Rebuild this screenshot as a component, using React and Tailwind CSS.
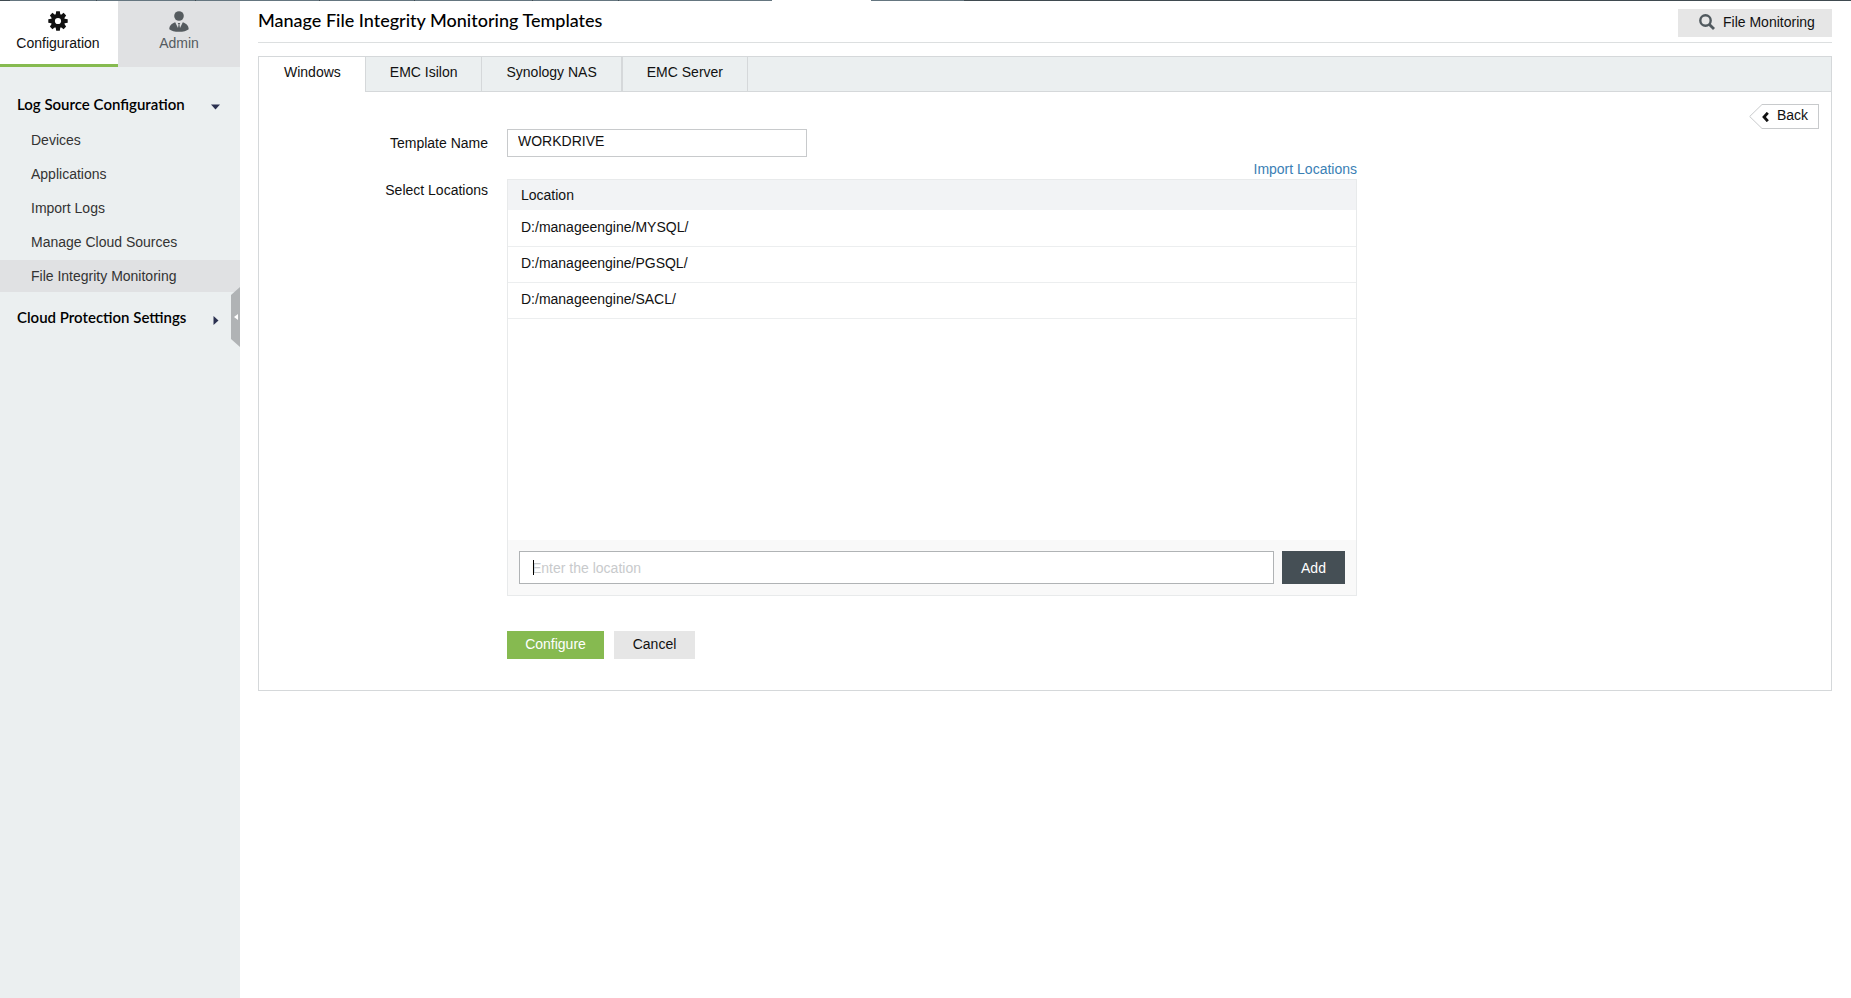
import { useState } from "react";

const menuItems = [
  "Devices",
  "Applications",
  "Import Logs",
  "Manage Cloud Sources",
  "File Integrity Monitoring",
];

const tabs = ["Windows", "EMC Isilon", "Synology NAS", "EMC Server"];

function GearIcon() {
  return (
    <svg width="20" height="20" viewBox="0 0 20 20" fill="#111">
      {[0, 45, 90, 135].map((angle) => (
        <path
          key={angle}
          d="M8.2 0.3h3.6l0.5 3v13.4l-0.5 3H8.2l-0.5-3V3.3z"
          transform={`rotate(${angle} 10 10)`}
        />
      ))}
      <circle cx="10" cy="10" r="7" />
      <circle cx="10" cy="10" r="3.1" fill="#fff" />
    </svg>
  );
}

function AdminIcon() {
  return (
    <svg width="20" height="21" viewBox="0 0 20 21" fill="currentColor">
      <circle cx="10" cy="5" r="4.8" />
      <path d="M0.3 18.2C0.3 14.5 2.6 12.6 6.2 11.2L9 17l0.6-3.4-0.9-1.5h2.6l-0.9 1.5L11 17l2.8-5.8c3.6 1.4 5.9 3.3 5.9 7-1.8 1.7-5.6 2.6-9.7 2.6s-7.9-0.9-9.7-2.6z" />
    </svg>
  );
}

function SearchIcon() {
  return (
    <svg width="16" height="16" viewBox="0 0 16 16" fill="none" stroke="#50595e">
      <circle cx="6.5" cy="6.5" r="5.2" strokeWidth="2.4" />
      <path d="M10.4 10.4L15 15" strokeWidth="2.8" />
    </svg>
  );
}

function TopStrip() {
  return (
    <div className="flex h-px">
      <div className="w-[10px] bg-[#3f4a50]" />
      <div className="w-[86px] bg-[#657680]" />
      <div className="w-px bg-[#3f4a50]" />
      <div className="w-[98px] bg-[#657680]" />
      <div className="w-px bg-[#3f4a50]" />
      <div className="w-[123px] bg-[#657680]" />
      <div className="w-px bg-[#3f4a50]" />
      <div className="w-[94px] bg-[#657680]" />
      <div className="w-px bg-[#3f4a50]" />
      <div className="w-[117px] bg-[#657680]" />
      <div className="w-px bg-[#3f4a50]" />
      <div className="w-[85px] bg-[#657680]" />
      <div className="w-px bg-[#3f4a50]" />
      <div className="w-[153px] bg-[#657680]" />
      <div className="w-[99px] bg-white" />
      <div className="w-[93px] bg-[#657680]" />
      <div className="flex-1 bg-[#3f4a50]" />
    </div>
  );
}

function Sidebar() {
  return (
    <aside className="relative w-60 shrink-0 bg-[#ebeff0]">
      <nav className="flex h-[66px] text-sm leading-5">
        <a
          href="#configuration"
          className="flex w-[118px] flex-col items-center border-b-3 border-[#86ba50] bg-white pt-[10px] pr-[2px] text-[#111]"
        >
          <GearIcon />
          <span className="mt-[2px]">Configuration</span>
        </a>
        <a
          href="#admin"
          className="flex flex-1 flex-col items-center bg-[#e0e1e3] pt-[10px] text-[#555b5f]"
        >
          <AdminIcon />
          <span className="mt-px">Admin</span>
        </a>
      </nav>

      {/* Log source section */}
      <button className="mt-7 flex h-5 w-full items-center justify-between pr-5 pl-[17px] font-[Lato,sans-serif] text-[15px] font-semibold text-black">
        Log Source Configuration
        <svg width="9" height="6" viewBox="0 0 9 6" className="mt-1" fill="#2b3150">
          <path d="M0 0.5h9L4.5 5.5z" />
        </svg>
      </button>
      <ul className="mt-[9px] flex flex-col gap-[2px] text-sm text-[#333]">
        {menuItems.map((item) => (
          <li key={item}>
            <a
              href="#"
              className={`flex h-8 items-center pl-[31px] ${
                item === "File Integrity Monitoring" ? "bg-[#e0e1e3]" : ""
              }`}
            >
              {item}
            </a>
          </li>
        ))}
      </ul>
      <button className="mt-4 flex h-5 w-full items-center justify-between pr-[21px] pl-[17px] font-[Lato,sans-serif] text-[15px] font-semibold text-black">
        Cloud Protection Settings
        <svg width="6" height="9" viewBox="0 0 6 9" className="mt-1" fill="#2b3150">
          <path d="M0.5 0v9L5.5 4.5z" />
        </svg>
      </button>

      {/* Collapse handle */}
      <button aria-label="Collapse menu" className="absolute top-[286px] right-0">
        <svg width="9" height="60" viewBox="0 0 9 60">
          <path d="M9 0v60L0 52V8z" fill="#b0b3b5" />
          <path d="M7 27v6L3 30z" fill="#fff" />
        </svg>
      </button>
    </aside>
  );
}

export default function App() {
  const [activeTab, setActiveTab] = useState("Windows");
  const [templateName, setTemplateName] = useState("WORKDRIVE");
  const [newLocation, setNewLocation] = useState("");
  const [locations, setLocations] = useState([
    "D:/manageengine/MYSQL/",
    "D:/manageengine/PGSQL/",
    "D:/manageengine/SACL/",
  ]);

  const addLocation = () => {
    if (!newLocation) return;
    setLocations([...locations, newLocation]);
    setNewLocation("");
  };

  return (
    <div className="flex min-h-screen flex-col bg-white font-['Liberation_Sans',Arial,sans-serif] text-sm text-[#111]">
      <TopStrip />
      <div className="flex flex-1">
        <Sidebar />

        <main className="min-w-0 flex-1 pr-[19px] pl-[18px]">
          <header className="flex h-[42px] items-start justify-between border-b border-[#dcdfe0] pt-2">
            <h1 className="font-[Lato,sans-serif] text-lg leading-[22px] font-medium text-black">
              Manage File Integrity Monitoring Templates
            </h1>
            <button className="flex h-7 w-[154px] items-center gap-2 bg-[#e6e6e6] pb-[2px] pl-[21px]">
              <SearchIcon />
              File Monitoring
            </button>
          </header>

          <section className="mt-[13px] border border-[#d5d8da]">
            <div className="flex h-[35px] bg-[#ebeff0]">
              {tabs.map((tab) => (
                <button
                  key={tab}
                  onClick={() => setActiveTab(tab)}
                  className={`border-r border-[#d5d8da] pr-6 last-of-type:border-l ${
                    activeTab === tab ? "bg-white pb-[5px] pl-[25px]" : "border-b pb-1 pl-6"
                  }`}
                >
                  {tab}
                </button>
              ))}
              <div className="flex-1 border-b border-[#d5d8da]" />
            </div>

            <div className="flex justify-between pr-3 pb-[31px]">
              <div className="grid flex-1 grid-cols-[229px_minmax(0,850px)] gap-x-[19px] pt-[37px]">
                <label htmlFor="template" className="text-right leading-7">
                  Template Name
                </label>
                <input
                  id="template"
                  value={templateName}
                  onChange={(e) => setTemplateName(e.target.value)}
                  className="h-7 w-[300px] border border-[#c8cacc] px-[10px] pb-1 outline-none"
                />

                <label htmlFor="location" className="pt-[23px] text-right leading-5">
                  Select Locations
                </label>
                <div className="pt-[2px]">
                  <div className="text-right leading-5">
                    <a href="#import" className="text-[#3a80b5]">
                      Import Locations
                    </a>
                  </div>
                  <div className="border border-[#e8eaeb]">
                    <div className="min-h-[360px]">
                      <table className="w-full text-left">
                        <thead>
                          <tr className="h-[30px] bg-[#f2f3f5]">
                            <th className="px-[13px] font-normal">Location</th>
                          </tr>
                        </thead>
                        <tbody>
                          {locations.map((loc) => (
                            <tr key={loc} className="h-9 border-b border-[#eceeef]">
                              <td className="px-[13px] pb-[2px]">{loc}</td>
                            </tr>
                          ))}
                        </tbody>
                      </table>
                    </div>
                    <div className="flex gap-2 bg-[#f9f9f9] px-[11px] py-[11px]">
                      <div className="relative min-w-0 flex-1">
                        <input
                          id="location"
                          value={newLocation}
                          onChange={(e) => setNewLocation(e.target.value)}
                          placeholder="Enter the location"
                          className="h-[33px] w-full border border-[#b0b3b5] bg-white px-3 outline-none placeholder:text-[#c8cacc]"
                        />
                        {/* Text cursor while the box is empty */}
                        {!newLocation && (
                          <span className="pointer-events-none absolute top-[9px] left-[14px] h-[15px] w-px bg-black" />
                        )}
                      </div>
                      <button
                        onClick={addLocation}
                        className="h-[33px] w-[63px] bg-[#454f55] text-white"
                      >
                        Add
                      </button>
                    </div>
                  </div>
                </div>

                <div className="col-start-2 flex gap-[10px] pt-[35px]">
                  <button className="h-7 w-[97px] bg-[#86ba50] pb-[2px] text-white">
                    Configure
                  </button>
                  <button className="h-7 w-[81px] bg-[#e6e6e6] pb-[2px]">Cancel</button>
                </div>
              </div>

              <button className="mt-3 flex h-[25px] items-stretch">
                <svg width="13" height="25" viewBox="0 0 13 25" fill="none" stroke="#c8cacc">
                  <path d="M13 0.5L0.7 12.5L13 24.5" />
                </svg>
                <span className="flex w-[57px] items-center gap-2 border-y border-r border-[#c8cacc] pb-[3px]">
                  <svg width="7" height="10" viewBox="0 0 7 10" fill="none" stroke="#111" strokeWidth="2.8" className="mt-1">
                    <path d="M5.8 0.8L2 5l3.8 4.2" />
                  </svg>
                  Back
                </span>
              </button>
            </div>
          </section>
        </main>
      </div>
    </div>
  );
}
